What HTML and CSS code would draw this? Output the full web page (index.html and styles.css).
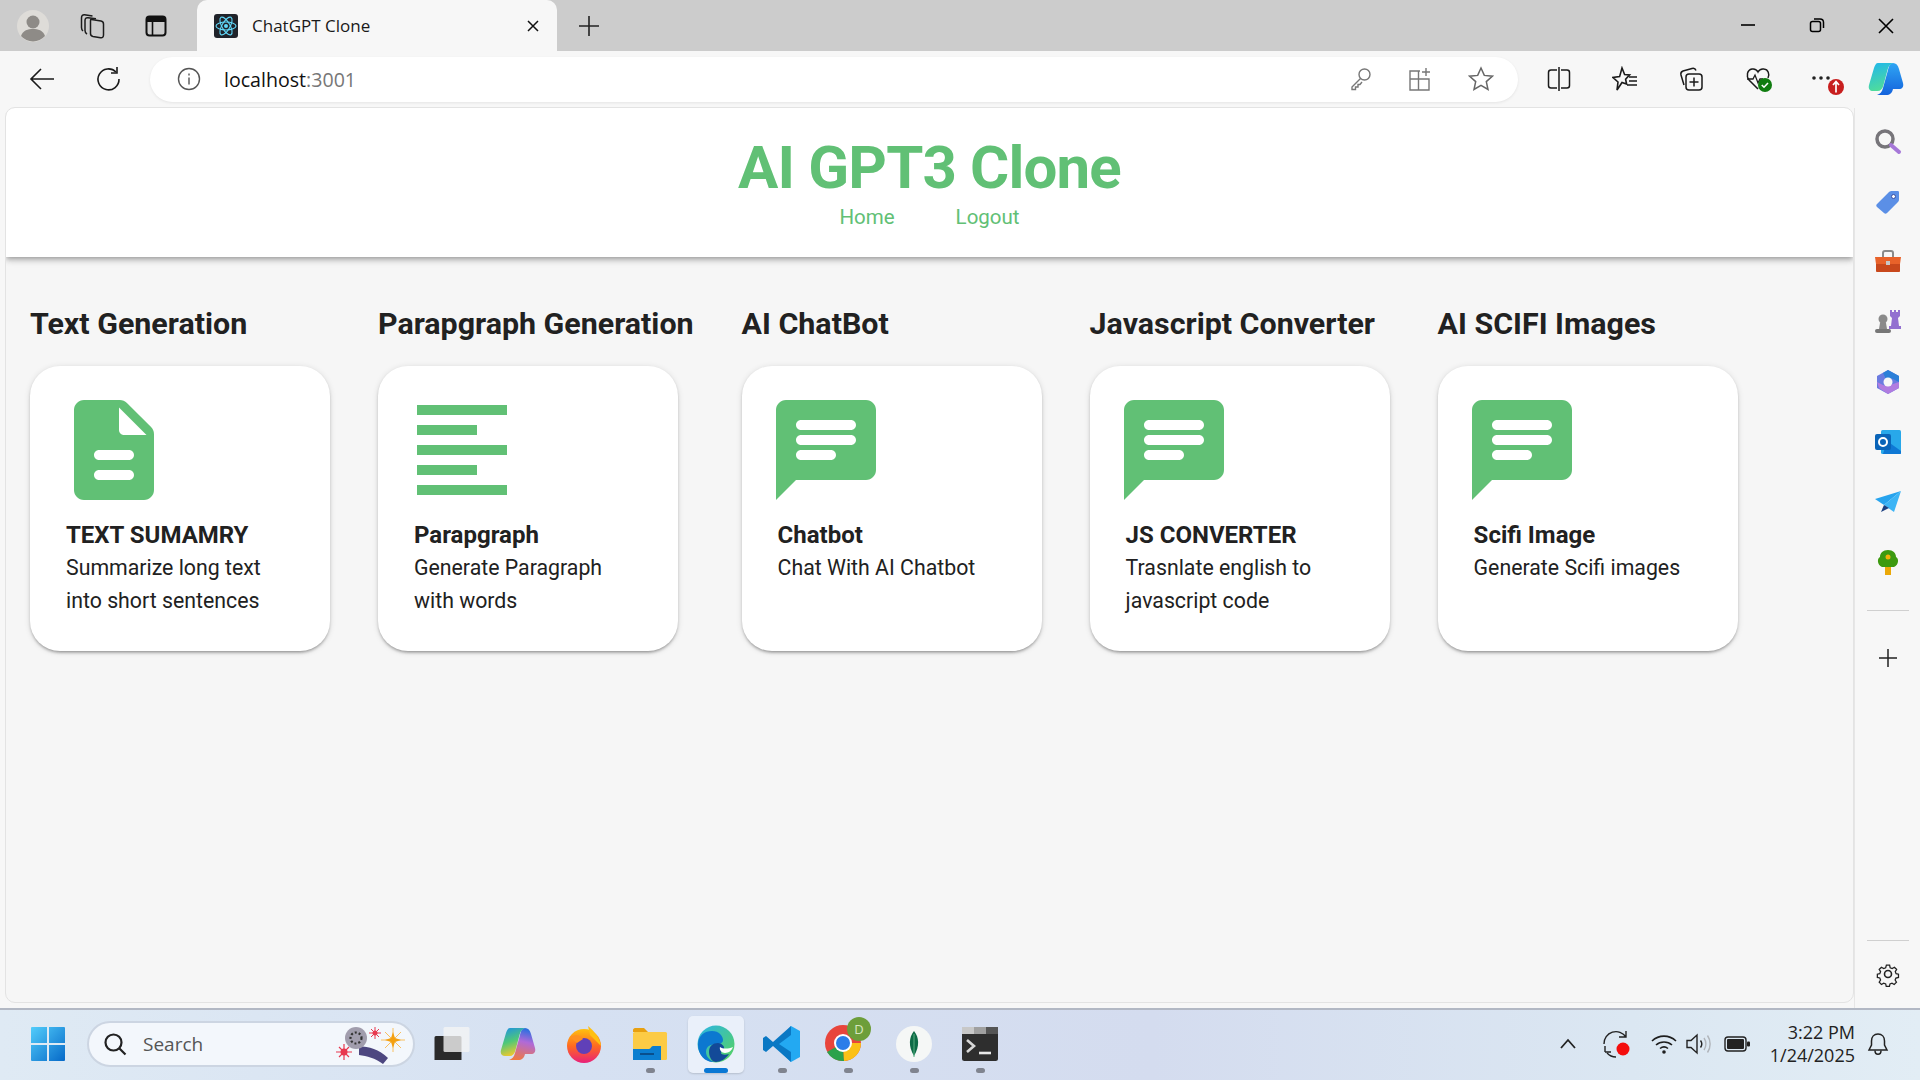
FILE: index.html
```html
<!DOCTYPE html>
<html lang="en">
<head>
    <meta charset="UTF-8">
    <title>ChatGPT Clone</title>
    <link rel="stylesheet" href="styles.css">
</head>
<body>
    <div class="tabstrip">
        <div class="strip-btn strip-profile">
            <svg width="32" height="32" viewBox="0 0 32 32"><circle cx="16" cy="16" r="16" fill="#dedcd8"/><circle cx="16" cy="12" r="6.5" fill="#8e8b87"/><path d="M4 26c2-6 7-7 12-7s10 1 12 7a16 16 0 0 1-24 0z" fill="#8e8b87"/></svg>
        </div>
        <div class="strip-btn">
            <svg width="26" height="26" viewBox="0 0 26 26" fill="none" stroke="#1c1c1c" stroke-width="1.5"><path d="M11.500 6.500l9.500 1.500c1.500.3 2.500 1.500 2.500 3v11c0 2-1 3-3 2.700l-7.500-1.200c-1.500-.3-2.500-1.500-2.500-3V9c0-1.800 0-2.800 1-2.500z"/><path d="M7 21c-1-.6-2-1.800-2-3.500V7.500c0-2 1-3 3-2.800l8 1"/><path d="M3 18c-1-.8-1.500-2-1.500-3.500V5c0-2 1-3.500 3-3.300l8 1.300"/></svg>
        </div>
        <div class="strip-btn">
            <svg width="24" height="24" viewBox="0 0 24 24"><rect x="2.500" y="2.500" width="19" height="19" rx="3" fill="none" stroke="#111" stroke-width="2"/><path d="M3 3h18v5H3z" fill="#111"/><path d="M8.500 8v13" stroke="#111" stroke-width="1.600"/></svg>
        </div>
        <div class="tab">
            <svg class="tab-icon" width="24" height="24" viewBox="0 0 24 24"><rect width="24" height="24" rx="3" fill="#20232a"/><g fill="none" stroke="#61dafb" stroke-width="1.100"><ellipse cx="12" cy="12" rx="10" ry="4"/><ellipse cx="12" cy="12" rx="10" ry="4" transform="rotate(60 12 12)"/><ellipse cx="12" cy="12" rx="10" ry="4" transform="rotate(120 12 12)"/></g><circle cx="12" cy="12" r="2" fill="#61dafb"/></svg>
            <span class="tab-title">ChatGPT Clone</span>
            <svg width="14" height="14" viewBox="0 0 14 14" stroke="#111" stroke-width="1.500"><path d="M2 2l10 10M12 2L2 12"/></svg>
        </div>
        <div class="strip-new">
            <svg width="22" height="22" viewBox="0 0 22 22" stroke="#222" stroke-width="1.600"><path d="M11 1v20M1 11h20"/></svg>
        </div>
        <div class="win-btns">
            <div class="win-btn"><svg width="16" height="16" viewBox="0 0 16 16" stroke="#000" stroke-width="1.600"><path d="M1 8h14"/></svg></div>
            <div class="win-btn"><svg width="16" height="16" viewBox="0 0 16 16" fill="none" stroke="#000" stroke-width="1.500"><rect x="1.500" y="4.500" width="10" height="10" rx="2"/><path d="M5 2h6c2 0 3.500 1.500 3.500 3.500V11"/></svg></div>
            <div class="win-btn"><svg width="18" height="18" viewBox="0 0 18 18" stroke="#000" stroke-width="1.600"><path d="M2 2l14 14M16 2L2 16"/></svg></div>
        </div>
    </div>

    <div class="toolbar">
        <div class="tool-btn">
            <svg width="26" height="24" viewBox="0 0 26 24" fill="none" stroke="#1a1a1a" stroke-width="1.600"><path d="M25 12H2M12 2L2 12l10 10"/></svg>
        </div>
        <div class="tool-btn">
            <svg width="26" height="26" viewBox="0 0 26 26" fill="none" stroke="#1a1a1a" stroke-width="1.600"><path d="M21 6a10.500 10.500 0 1 0 3 7"/><path d="M22 1v6h-6"/></svg>
        </div>
        <div class="address">
            <svg class="addr-info" width="24" height="24" viewBox="0 0 24 24" fill="none" stroke="#555" stroke-width="1.400"><circle cx="12" cy="12" r="10.500"/><path d="M12 10.500v7M12 6.500v2"/></svg>
            <span class="url">localhost<span class="url-port">:3001</span></span>
            <div class="addr-tools">
                <svg width="22" height="24" viewBox="0 0 22 24" fill="none" stroke="#777" stroke-width="1.400"><circle cx="14.500" cy="7.500" r="5.500"/><path d="M10.500 11.500L2 20v2.500h3.500V20H8v-2.500h2l2-2.500"/></svg>
                <svg width="24" height="24" viewBox="0 0 24 24" fill="none" stroke="#777" stroke-width="1.400"><path d="M12 4H2v19h19V12H2M10.500 4v19"/><path d="M18 1v8M14 5h8"/></svg>
                <svg width="26" height="26" viewBox="0 0 26 26" fill="none" stroke="#666" stroke-width="1.500"><path d="M13 2l3.300 7.400 8 .8-6 5.400 1.700 7.900L13 19.400l-7 4.100 1.700-7.900-6-5.400 8-.8z"/></svg>
            </div>
        </div>
        <div class="tool-group">
            <div class="tool-btn">
                <svg width="24" height="26" viewBox="0 0 24 26" fill="none" stroke="#1a1a1a" stroke-width="1.500"><path d="M10 4H4a2.500 2.500 0 0 0-2.500 2.500v13A2.500 2.500 0 0 0 4 22h6M14 4h6a2.500 2.500 0 0 1 2.500 2.500v13A2.500 2.500 0 0 1 20 22h-6M12 1v24"/></svg>
            </div>
            <div class="tool-btn">
                <svg width="26" height="26" viewBox="0 0 26 26" fill="none" stroke="#1a1a1a" stroke-width="1.600"><path d="M10 2l2.600 6.500 5 .4-4 4.300 1 4.800-4.600-1.500L5 24l1-8-5-4.500 6.600-.9z"/><path d="M17 11h8M17 15h8M15 19h10"/></svg>
            </div>
            <div class="tool-btn">
                <svg width="26" height="26" viewBox="0 0 26 26" fill="none" stroke="#1a1a1a" stroke-width="1.500"><path d="M6 19L3 9c-.5-2 .5-3.500 2-4l9-2.500c2-.5 3.500.5 4 2"/><rect x="8" y="8" width="16" height="16" rx="3"/><path d="M16 11.500v9M11.500 16h9"/></svg>
            </div>
            <div class="tool-btn tool-health">
                <svg width="28" height="28" viewBox="0 0 28 28"><path d="M13 24L4 15C1 11 2 5 7 4c3-.5 5 1 6 3 1-2 3-3.500 6-3 4 .5 6 5 4 9" fill="none" stroke="#1a1a1a" stroke-width="1.500"/><path d="M2 14h6l2-4 3 8 2-4h3" fill="none" stroke="#1a1a1a" stroke-width="1.300"/><circle cx="20" cy="20" r="7" fill="#107c10"/><path d="M16.800 20l2.200 2.200 4-4.200" fill="none" stroke="#fff" stroke-width="1.600"/></svg>
            </div>
            <div class="tool-btn tool-more">
                <svg width="42" height="32" viewBox="0 0 42 32"><circle cx="12" cy="15" r="1.800" fill="#222"/><circle cx="19" cy="15" r="1.800" fill="#222"/><circle cx="26" cy="15" r="1.800" fill="#222"/><circle cx="34" cy="24" r="8" fill="#c81e1e"/><path d="M34 29.500v-10M31 22l3-3.500 3 3.500" fill="none" stroke="#fff" stroke-width="1.700"/></svg>
            </div>
            <div class="tool-btn tool-copilot">
                <svg width="36" height="36" viewBox="0 0 36 36"><defs><linearGradient id="cpA" x1="0" y1="0" x2="0.300" y2="1"><stop offset="0" stop-color="#1fb6ee"/><stop offset="1" stop-color="#4fdc9c"/></linearGradient><linearGradient id="cpB" x1="0" y1="0" x2="0" y2="1"><stop offset="0" stop-color="#2fa5f4"/><stop offset="1" stop-color="#1463dc"/></linearGradient></defs><path d="M25 2c3 0 5 2 6 6l4 14c1 4-1 6-4 6h-6c-1 4-3 6-7 6H9c3-1 5-3 6-7l5-18c1-4 2-7 5-7z" fill="url(#cpB)"/><path d="M10 2h15c-3 1-4.500 3-5.500 7l-4 15c-1 4-3 6-6 6H5c-3 0-5-2-4-6l5-17c1-3 2-5 4-5z" fill="url(#cpA)"/></svg>
            </div>
        </div>
    </div>

    <div class="workspace">
        <div class="viewport">
            <header class="site-header">
                <h1 class="site-title">AI GPT3 Clone</h1>
                <nav class="site-nav">
                    <a href="#">Home</a>
                    <a href="#">Logout</a>
                </nav>
            </header>
            <main class="features">
                <section class="feature">
                    <h2 class="feature-heading">Text Generation</h2>
                    <div class="card">
                        <svg class="card-icon" viewBox="0 0 24 24"><path d="M14.590 2.590c-.38-.38-.89-.59-1.420-.59H6c-1.100 0-2 .9-2 2v16c0 1.100.89 2 1.990 2H18c1.100 0 2-.9 2-2V8.830c0-.53-.21-1.040-.59-1.410l-4.820-4.830zM15 18H9c-.55 0-1-.45-1-1s.45-1 1-1h6c.55 0 1 .45 1 1s-.45 1-1 1zm0-4H9c-.55 0-1-.45-1-1s.45-1 1-1h6c.55 0 1 .45 1 1s-.45 1-1 1zm-2-6V3.500L18.500 9H14c-.55 0-1-.45-1-1z"/></svg>
                        <div class="card-text">
                            <h3>TEXT SUMAMRY</h3>
                            <p>Summarize long text<br>into short sentences</p>
                        </div>
                    </div>
                </section>
                <section class="feature">
                    <h2 class="feature-heading">Parapgraph Generation</h2>
                    <div class="card">
                        <svg class="card-icon" viewBox="0 0 24 24"><path d="M15 15H3v2h12v-2zm0-8H3v2h12V7zM3 13h18v-2H3v2zm0 8h18v-2H3v2zM3 3v2h18V3H3z"/></svg>
                        <div class="card-text">
                            <h3>Parapgraph</h3>
                            <p>Generate Paragraph<br>with words</p>
                        </div>
                    </div>
                </section>
                <section class="feature">
                    <h2 class="feature-heading">AI ChatBot</h2>
                    <div class="card">
                        <svg class="card-icon" viewBox="0 0 24 24"><path d="M20 2H4c-1.100 0-2 .9-2 2v18l4-4h14c1.100 0 2-.9 2-2V4c0-1.100-.9-2-2-2zM7 9h10c.55 0 1 .45 1 1s-.45 1-1 1H7c-.55 0-1-.45-1-1s.45-1 1-1zm6 5H7c-.55 0-1-.45-1-1s.45-1 1-1h6c.55 0 1 .45 1 1s-.45 1-1 1zm4-6H7c-.55 0-1-.45-1-1s.45-1 1-1h10c.55 0 1 .45 1 1s-.45 1-1 1z"/></svg>
                        <div class="card-text">
                            <h3>Chatbot</h3>
                            <p>Chat With AI Chatbot</p>
                        </div>
                    </div>
                </section>
                <section class="feature">
                    <h2 class="feature-heading">Javascript Converter</h2>
                    <div class="card">
                        <svg class="card-icon" viewBox="0 0 24 24"><path d="M20 2H4c-1.100 0-2 .9-2 2v18l4-4h14c1.100 0 2-.9 2-2V4c0-1.100-.9-2-2-2zM7 9h10c.55 0 1 .45 1 1s-.45 1-1 1H7c-.55 0-1-.45-1-1s.45-1 1-1zm6 5H7c-.55 0-1-.45-1-1s.45-1 1-1h6c.55 0 1 .45 1 1s-.45 1-1 1zm4-6H7c-.55 0-1-.45-1-1s.45-1 1-1h10c.55 0 1 .45 1 1s-.45 1-1 1z"/></svg>
                        <div class="card-text">
                            <h3>JS CONVERTER</h3>
                            <p>Trasnlate english to<br>javascript code</p>
                        </div>
                    </div>
                </section>
                <section class="feature">
                    <h2 class="feature-heading">AI SCIFI Images</h2>
                    <div class="card">
                        <svg class="card-icon" viewBox="0 0 24 24"><path d="M20 2H4c-1.100 0-2 .9-2 2v18l4-4h14c1.100 0 2-.9 2-2V4c0-1.100-.9-2-2-2zM7 9h10c.55 0 1 .45 1 1s-.45 1-1 1H7c-.55 0-1-.45-1-1s.45-1 1-1zm6 5H7c-.55 0-1-.45-1-1s.45-1 1-1h6c.55 0 1 .45 1 1s-.45 1-1 1zm4-6H7c-.55 0-1-.45-1-1s.45-1 1-1h10c.55 0 1 .45 1 1s-.45 1-1 1z"/></svg>
                        <div class="card-text">
                            <h3>Scifi Image</h3>
                            <p>Generate Scifi images</p>
                        </div>
                    </div>
                </section>
            </main>
        </div>
        <aside class="sidebar">
            <svg class="side-icon" viewBox="0 0 28 28"><circle cx="11" cy="11" r="8" fill="none" stroke="#77757a" stroke-width="3.500"/><path d="M17 17l8 7" stroke="#a678d8" stroke-width="4" stroke-linecap="round"/></svg>
            <svg class="side-icon" viewBox="0 0 28 28"><path d="M3 16L15 4c1-1 2-1 3-1h6c1 0 1 1 1 2v6c0 1 0 2-1 3L13 25c-1 1-2 1-3 0l-7-6c-1-1-1-2 0-3z" fill="#5b8fe6"/><circle cx="19.500" cy="8.500" r="2" fill="#fff" stroke="#3b4fa0"/></svg>
            <svg class="side-icon" viewBox="0 0 28 28"><path d="M9 9V5c0-1 1-2 2-2h6c1 0 2 1 2 2v4" fill="none" stroke="#8a8a8a" stroke-width="2"/><path d="M1 9h26l-1 7H2z" fill="#e8622a"/><path d="M2 16h24v7c0 1-1 1-1 1H3s-1 0-1-1z" fill="#c8481c"/><rect x="12" y="13" width="4" height="4" fill="#c8c8c8"/></svg>
            <svg class="side-icon" viewBox="0 0 28 28"><circle cx="9" cy="11" r="4.500" fill="#8a8a8a"/><path d="M6 15h6l1 6H5z" fill="#8a8a8a"/><rect x="1" y="21" width="16" height="4" rx="2" fill="#777"/><path d="M16 2h2v2h2V2h2v2h2V2h2v6l-2 2 1 8h2v3H15v-3h2l1-8-2-2z" fill="#9370d0"/></svg>
            <svg class="side-icon" viewBox="0 0 28 28"><path d="M14 2l11 6v12l-11 6L3 20V8z" fill="#6b7be0"/><path d="M14 2l11 6v6l-6-3c-2-1-5-1-7 0L9 5z" fill="#2b7fd8"/><path d="M3 14l6 3c2 1 5 1 7 0l9-3v6l-11 6-9-6z" fill="#b07ce0"/><circle cx="14" cy="14" r="4.500" fill="#f7f7f7"/></svg>
            <svg class="side-icon" viewBox="0 0 28 28"><rect x="7" y="2" width="20" height="24" rx="1.500" fill="#28a8ea"/><path d="M13 13l14 10v2c0 1-1 1-1 1H9z" fill="#0f78d4"/><rect x="1" y="6" width="16" height="16" rx="2" fill="#0a64b8"/><circle cx="9" cy="14" r="4" fill="none" stroke="#fff" stroke-width="2"/></svg>
            <svg class="side-icon" viewBox="0 0 28 28"><path d="M1 11L27 3 10 17z" fill="#27a4ee"/><path d="M27 3L20 24l-10-7z" fill="#3cb4f5"/><path d="M7 24l3-7 5 3z" fill="#1a3f80"/></svg>
            <svg class="side-icon" viewBox="0 0 28 28"><rect x="11" y="19" width="6" height="8" fill="#eba808"/><path d="M14 2c5 0 8 3 8 7 3 1 3 8-2 10H8C3 17 3 10 6 9c0-4 3-7 8-7z" fill="#3d9a10"/><circle cx="14" cy="9" r="2.500" fill="#f2b20a"/></svg>
            <div class="side-rule"></div>
            <svg class="side-icon" viewBox="0 0 28 28" stroke="#222" stroke-width="1.500"><path d="M14 5v18M5 14h18"/></svg>
            <div class="side-foot">
                <div class="side-rule"></div>
                <svg class="side-icon" viewBox="0 0 28 28" fill="none" stroke="#222" stroke-width="1.600"><circle cx="14" cy="14" r="3.500"/><path d="M12 3h4l.7 3.200 2.500 1 2.800-1.700 2.800 2.800-1.700 2.800 1 2.500 3 .7v4l-3.200.7-1 2.500 1.700 2.800-2.800 2.800-2.800-1.700-2.500 1-.7 3h-4l-.7-3-2.500-1-2.800 1.700-2.800-2.800 1.700-2.800-1-2.500-3-.7v-4l3-.7 1-2.500-1.700-2.800 2.800-2.800 2.800 1.700 2.500-1z" transform="translate(2.800 2.800) scale(.8)"/></svg>
            </div>
        </aside>
    </div>

    <footer class="taskbar">
        <svg class="start" width="36" height="36" viewBox="0 0 36 36"><defs><linearGradient id="winG" x1="0" y1="0" x2="1" y2="1"><stop offset="0" stop-color="#52cdfb"/><stop offset="1" stop-color="#0669c8"/></linearGradient></defs><path d="M1 2a1 1 0 0 1 1-1h15v16H1zM19 1h15a1 1 0 0 1 1 1v15H19zM1 19h16v16H2a1 1 0 0 1-1-1zM19 19h16v15a1 1 0 0 1-1 1H19z" fill="url(#winG)"/></svg>
        <div class="search">
            <svg width="24" height="24" viewBox="0 0 24 24" fill="none" stroke="#222" stroke-width="2.200"><circle cx="10.500" cy="10.500" r="8"/><path d="M16.500 16.500l6 6"/></svg>
            <span class="search-label">Search</span>
            <svg class="search-art" width="72" height="42" viewBox="0 0 72 42">
                <path d="M20 23c10 1 20 3 29 12l-5 6c-8-6-16-8-24-9z" fill="#4d4780"/>
                <circle cx="17" cy="15" r="11" fill="#a19dad"/>
                <circle cx="17" cy="15" r="5.500" fill="none" stroke="#333" stroke-width="2.200" stroke-dasharray="2 2"/>
                <g stroke="#e8384f" stroke-width="1.200"><path d="M5 21v16M-3 29h16M0 24l10 10M10 24L0 34"/><path d="M36 4v12M30 10h12M32 6l8 8M40 6l-8 8" stroke-width="1"/></g>
                <circle cx="5" cy="29" r="3.500" fill="#e8384f"/>
                <circle cx="36" cy="10" r="2.500" fill="#e8384f"/>
                <g stroke="#f8c060" stroke-width="1"><path d="M54 5v24M42 17h24M46 9l16 16M62 9L46 25"/></g>
                <path d="M54 9l2 6 6 2-6 2-2 6-2-6-6-2 6-2z" fill="#f4a010"/>
            </svg>
        </div>
        <div class="task-apps">
            <div class="task-app">
                <svg width="36" height="34" viewBox="0 0 36 34"><path d="M2 9h24a1.500 1.500 0 0 1 1.500 1.500V33H0.500V10.500A1.500 1.500 0 0 1 2 9z" fill="#2a2a2a"/><rect x="9.500" y="0" width="26" height="25" rx="1.500" fill="#f4f4f4" fill-opacity=".8"/></svg>
            </div>
            <div class="task-app">
                <svg width="36" height="36" viewBox="0 0 36 36"><defs><linearGradient id="tcpL" x1="0" y1="0" x2="0.300" y2="1"><stop offset="0" stop-color="#1c8fe8"/><stop offset=".55" stop-color="#4fc878"/><stop offset="1" stop-color="#e8c830"/></linearGradient><linearGradient id="tcpR" x1="0.500" y1="0" x2="0.300" y2="1"><stop offset="0" stop-color="#2a6fe0"/><stop offset=".4" stop-color="#b06ad8"/><stop offset="1" stop-color="#f07a40"/></linearGradient></defs><path d="M25 2c3 0 5 2 6 6l4 14c1 4-1 6-4 6h-6c-1 4-3 6-7 6H9c3-1 5-3 6-7l5-18c1-4 2-7 5-7z" fill="url(#tcpR)"/><path d="M10 2h15c-3 1-4.500 3-5.500 7l-4 15c-1 4-3 6-6 6H5c-3 0-5-2-4-6l5-17c1-3 2-5 4-5z" fill="url(#tcpL)"/></svg>
            </div>
            <div class="task-app">
                <svg width="36" height="38" viewBox="0 0 36 38"><defs><linearGradient id="ffx" x1="0" y1="0" x2="0" y2="1"><stop offset="0" stop-color="#ffc010"/><stop offset=".5" stop-color="#ff6a20"/><stop offset="1" stop-color="#e8207a"/></linearGradient></defs><circle cx="18" cy="21" r="17" fill="url(#ffx)"/><path d="M22 1c6 5 12 12 13 20L24 10z" fill="#ffc010"/><circle cx="18" cy="21" r="8" fill="#6040b8"/><path d="M4 12c6-3 11-2 13 2l-6 4z" fill="#ff9020"/></svg>
            </div>
            <div class="task-app task-app-open">
                <svg width="36" height="34" viewBox="0 0 36 34"><path d="M1 3c0-1 1-2 2-2h9l4 4h-15z" fill="#e8a010"/><rect x="1" y="5" width="34" height="28" rx="1.500" fill="#fccb45"/><path d="M1 22h16c2 0 2-3 4-3h8v14H1z" fill="#0b7ed0"/><path d="M8 27h14" stroke="#094f8c" stroke-width="2"/></svg>
            </div>
            <div class="task-app task-app-active">
                <svg width="38" height="38" viewBox="0 0 38 38"><defs><linearGradient id="edA" x1="0" y1="0" x2="1" y2="1"><stop offset="0" stop-color="#2bb4e8"/><stop offset="1" stop-color="#58d45a"/></linearGradient></defs><circle cx="19" cy="19" r="18.500" fill="url(#edA)"/><path d="M1 20C1 10 8 6 15 6c7 0 11 5 11 9 0 3-3 4-6 4-6 0-11 2-11 8 0 4 3 8 8 10C10 38 1 31 1 20z" fill="#0c78d0"/><path d="M12 27c0-6 4-9 9-9 3 0 7 3 6 6-1 2-3 2-3 4 0 2 5 2 8 1-3 5-9 8-13 8-4 0-7-5-7-10z" fill="#134a98"/><path d="M23 22c3 2 8 2 13 0-1 3-4 6-8 6-3 0-6-3-5-6z" fill="#fff"/></svg>
            </div>
            <div class="task-app task-app-open">
                <svg width="38" height="38" viewBox="0 0 38 38"><path d="M28 1l9 5v26l-9 5L11 20z" fill="#23a9f2"/><path d="M28 1L10 17 3 11 0 13v12l3 2 7-6 18 16V27L16 19 28 10z" fill="#0a78c4"/></svg>
            </div>
            <div class="task-app task-app-open">
                <svg class="chrome-icon" width="46" height="46" viewBox="0 0 46 46"><g transform="translate(0 8)"><circle cx="18" cy="18" r="18" fill="#e8453c"/><path d="M18 18L2 27a18 18 0 0 0 17 9z" fill="#2ba24c"/><path d="M18 18h18a18 18 0 0 1-17 18z" fill="#fbc116"/><circle cx="18" cy="18" r="9" fill="#fff"/><circle cx="18" cy="18" r="7" fill="#2b7de9"/></g><circle cx="34" cy="12" r="12" fill="#6d9e3a"/><text x="34" y="17" class="chrome-badge" text-anchor="middle">D</text></svg>
            </div>
            <div class="task-app task-app-open">
                <svg width="36" height="36" viewBox="0 0 36 36"><circle cx="18" cy="18" r="18" fill="#f5f7f6"/><path d="M18 5c5 6 6 15 0 25-6-10-5-19 0-25z" fill="#0e6b47"/><path d="M18 8v23" stroke="#57b080" stroke-width="1"/></svg>
            </div>
            <div class="task-app task-app-open">
                <svg width="36" height="34" viewBox="0 0 36 34"><rect width="36" height="34" rx="2.500" fill="#2e2e2e"/><rect width="12" height="7" fill="#c8c8c8"/><rect x="12" width="12" height="7" fill="#a0a0a0"/><rect x="24" width="12" height="7" fill="#555"/><path d="M5 13l7 6-7 6" fill="none" stroke="#d8d8d8" stroke-width="2.600"/><path d="M17 26h12" stroke="#e8e8e8" stroke-width="2.600"/></svg>
            </div>
        </div>
        <div class="tray">
            <svg class="tray-chevron" width="18" height="12" viewBox="0 0 18 12" fill="none" stroke="#222" stroke-width="1.800"><path d="M2 10l7-8 7 8"/></svg>
            <svg class="tray-sync" width="30" height="28" viewBox="0 0 30 28"><path d="M2 14a12 12 0 0 1 22-7M24 1v6h-7M3 22h6M3 16v6" fill="none" stroke="#222" stroke-width="1.400"/><path d="M5 23a12 12 0 0 0 9 4" fill="none" stroke="#222" stroke-width="1.400"/><circle cx="21" cy="19" r="6.500" fill="#f40d0d"/></svg>
            <svg class="tray-wifi" width="26" height="20" viewBox="0 0 26 20" fill="none" stroke="#1e1e1e" stroke-width="1.600"><path d="M1 7c7-6.500 17-6.500 24 0M5 11c4.500-4 11.500-4 16 0M9 14.500c2.500-2 5.500-2 8 0"/><circle cx="13" cy="18" r="1.800" fill="#1e1e1e" stroke="none"/></svg>
            <svg class="tray-sound" width="26" height="22" viewBox="0 0 26 22" fill="none" stroke="#222" stroke-width="1.400"><path d="M1 7.500h4L11 2v18l-6-5.500H1z"/><path d="M14.500 7.500c1.500 2 1.500 5 0 7"/><path d="M18 5c2.500 3.500 2.500 8.500 0 12M21.500 2.500c3.500 5 3.500 12 0 17" stroke="#b0b4ba"/></svg>
            <svg class="tray-battery" width="26" height="16" viewBox="0 0 26 16"><rect x="1" y="1" width="21" height="14" rx="3" fill="none" stroke="#222" stroke-width="1.400"/><rect x="3" y="3" width="17" height="10" rx="1" fill="#222"/><rect x="23" y="5.500" width="3" height="5" rx="1" fill="#222"/></svg>
            <div class="clock">
                <div>3:22 PM</div>
                <div>1/24/2025</div>
            </div>
            <svg class="tray-bell" width="22" height="24" viewBox="0 0 22 24" fill="none" stroke="#222" stroke-width="1.500"><path d="M11 2c-4 0-6.500 3-6.500 7v4L2 18h18l-2.500-5V9c0-4-2.500-7-6.500-7z"/><path d="M8 18.500c0 5 6 5 6 0"/></svg>
        </div>
    </footer>
</body>
</html>
```
FILE: styles.css
```css
* {
    box-sizing: border-box;
}

html, body {
    margin: 0;
    height: 1080px;
    overflow: hidden;
}

body {
    font-family: "Open Sans", sans-serif;
    background-color: #f7f7f7;
    display: flex;
    flex-direction: column;
}

/* browser chrome */
.tabstrip {
    height: 51px;
    background-color: #cccccc;
    display: flex;
    align-items: center;
    padding-left: 11px;
    flex-shrink: 0;
}
.strip-btn {
    width: 44px;
    height: 44px;
    margin-right: 19px;
    display: flex;
    align-items: center;
    justify-content: center;
}
.strip-profile {
    margin-right: 16px;
}
.tab {
    width: 360px;
    height: 51px;
    background-color: #f7f7f7;
    border-radius: 10px 10px 0 0;
    display: flex;
    align-items: center;
    padding: 0 17px;
}
.tab-icon {
    margin-right: 14px;
}
.tab-title {
    flex: 1;
    font-size: 17px;
    color: #1a1a1a;
}
.strip-new {
    width: 44px;
    margin-left: 10px;
    display: flex;
    justify-content: center;
}
.win-btns {
    margin-left: auto;
    display: flex;
}
.win-btn {
    width: 69px;
    display: flex;
    justify-content: center;
}

.toolbar {
    height: 56px;
    display: flex;
    align-items: center;
    padding-left: 20px;
    flex-shrink: 0;
}
.tool-btn {
    width: 44px;
    height: 44px;
    display: flex;
    align-items: center;
    justify-content: center;
}
.tool-btn + .tool-btn {
    margin-left: 22px;
}
.tool-btn.tool-health {
    margin-left: 24px;
}
.tool-btn.tool-more {
    margin-left: 20px;
}
.tool-btn.tool-copilot {
    margin-left: 19px;
}
.address {
    width: 1368px;
    height: 45px;
    margin-left: 20px;
    background-color: #fff;
    border-radius: 23px;
    box-shadow: 0 1px 3px rgba(0, 0, 0, 0.08);
    display: flex;
    align-items: center;
    padding-left: 27px;
}
.addr-info {
    margin-right: 23px;
}
.url {
    font-size: 19.6px;
    color: #111;
}
.url-port {
    color: #777;
}
.addr-tools {
    margin-left: auto;
    margin-right: 24px;
    display: flex;
    align-items: center;
    gap: 36px;
}
.tool-group {
    display: flex;
    margin-left: 19px;
}

.workspace {
    flex: 1;
    display: flex;
    min-height: 0;
}
.viewport {
    width: 1849px;
    height: 896px;
    margin-left: 5px;
    background-color: #f6f6f6;
    border: 1px solid #e3e3e3;
    border-radius: 10px;
    overflow: hidden;
    font-family: Roboto, sans-serif;
}
.sidebar {
    flex: 1;
    display: flex;
    flex-direction: column;
    align-items: center;
    padding-top: 20px;
    gap: 32px;
    border-left: 1px solid #e6e6e6;
    margin-top: 1px;
}
.side-icon {
    width: 28px;
    height: 28px;
    flex-shrink: 0;
}
.side-rule {
    width: 42px;
    height: 1px;
    background-color: #d0d0d0;
    margin: 2px 0 1px;
}
.side-foot {
    margin-top: auto;
    padding-bottom: 20px;
    display: flex;
    flex-direction: column;
    align-items: center;
    gap: 32px;
}
.side-foot .side-rule {
    margin: 0 0 -13px;
}

/* page */
.site-header {
    background-color: #fff;
    height: 149px;
    padding-top: 24px;
    text-align: center;
    box-shadow: 0 2px 4px -1px rgba(0, 0, 0, 0.2), 0 4px 5px 0 rgba(0, 0, 0, 0.14), 0 1px 10px 0 rgba(0, 0, 0, 0.12);
    position: relative;
}
.site-title {
    margin: 0;
    font-size: 60px;
    font-weight: 700;
    line-height: 72px;
    letter-spacing: -0.85px;
    color: #61c075;
}
.site-nav {
    display: flex;
    justify-content: center;
    gap: 61px;
    line-height: 26px;
}
.site-nav a {
    font-size: 20.5px;
    color: #61c075;
    text-decoration: none;
}

.features {
    display: flex;
    gap: 48px;
    padding: 49px 24px 24px;
}
.feature {
    min-width: 300px;
}
.feature-heading {
    margin: 0 0 24px;
    font-size: 30.4px;
    font-weight: 700;
    line-height: 36px;
    color: #212121;
    white-space: nowrap;
}
.card {
    width: 300px;
    height: 285px;
    background-color: #fff;
    border-radius: 30px;
    padding: 24px;
    box-shadow: 0 3px 3px -2px rgba(0, 0, 0, 0.25), 0 2px 3px 0 rgba(0, 0, 0, 0.14), 0 1px 6px 0 rgba(0, 0, 0, 0.12);
}
.card-icon {
    width: 120px;
    height: 120px;
    fill: #61c075;
    display: block;
}
.card-text {
    padding: 9px 12px;
    color: #212121;
}
.card-text h3 {
    margin: 0;
    font-size: 24px;
    font-weight: 700;
    line-height: 32px;
}
.card-text p {
    margin: 0;
    font-size: 21.3px;
    line-height: 33px;
}

/* windows taskbar */
.taskbar {
    height: 72px;
    flex-shrink: 0;
    background: linear-gradient(90deg, #dfeaf4 0%, #d6e1f2 30%, #d4dcef 60%, #dbe7f2 85%, #e2edf5 100%);
    border-top: 2px solid #b2b8c4;
    display: flex;
    align-items: center;
    padding: 0 0 2px 30px;
}
.search {
    width: 328px;
    height: 46px;
    margin-left: 21px;
    background-color: #f3f7fc;
    border: 2px solid #ccd5e2;
    border-radius: 23px;
    display: flex;
    align-items: center;
    padding-left: 14px;
}
.search-label {
    margin-left: 16px;
    font-size: 19px;
    color: #555;
}
.search-art {
    margin-left: auto;
    margin-right: 2px;
    overflow: visible;
}
.task-apps {
    display: flex;
    margin-left: 4px;
}
.task-app {
    width: 56px;
    height: 57px;
    margin: 0 5px;
    display: flex;
    align-items: center;
    justify-content: center;
    position: relative;
}
.task-app-open::after {
    content: "";
    position: absolute;
    bottom: 0;
    left: 24px;
    width: 9px;
    height: 5px;
    border-radius: 3px;
    background-color: #80848f;
}
.task-app-active {
    background-color: #eaf0fa;
    border-radius: 5px;
    box-shadow: 0 1px 2px rgba(0, 0, 0, 0.15);
}
.task-app-active::after {
    content: "";
    position: absolute;
    bottom: 0;
    left: 16px;
    width: 24px;
    height: 5px;
    border-radius: 3px;
    background-color: #0a78d4;
}
.chrome-icon {
    flex-shrink: 0;
    margin-top: -8px;
}
.chrome-badge {
    font-family: "Open Sans", sans-serif;
    font-size: 13px;
    fill: #d8e6c0;
}
.tray {
    margin-left: auto;
    display: flex;
    align-items: center;
}
.tray-chevron { margin-right: 25px; }
.tray-sync { margin-right: 19px; }
.tray-wifi { margin-right: 9px; }
.tray-sound { margin-right: 12px; }
.tray-battery { margin-right: 20px; }
.clock {
    font-size: 18px;
    line-height: 23px;
    color: #222;
    text-align: right;
    margin-right: 12px;
}
.tray-bell {
    margin-right: 31px;
}
```
